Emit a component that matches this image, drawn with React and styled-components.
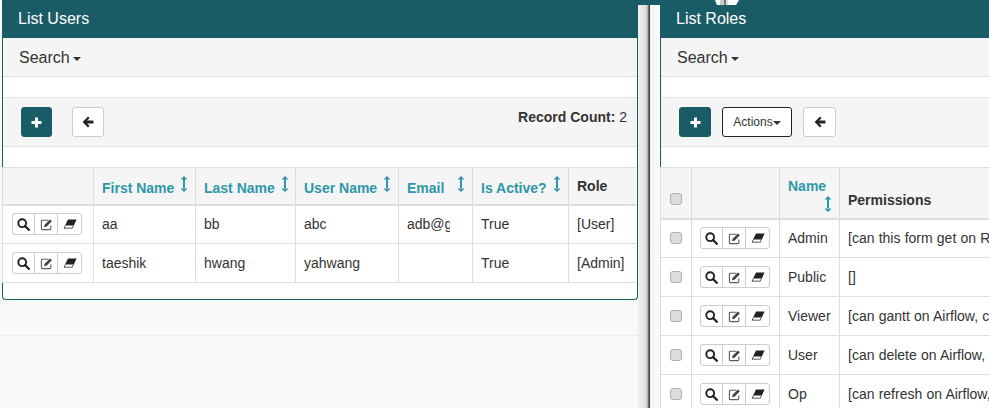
import styled, { createGlobalStyle } from 'styled-components';

const TEAL = '#1a5c66';
const LINK = '#2d97a8';

const GlobalStyle = createGlobalStyle`
  html, body {
    margin: 0;
    height: 408px;
    overflow: hidden;
    background: #fff;
  }
  body {
    font-family: "Liberation Sans", Arial, sans-serif;
    font-size: 14px;
    color: #333;
  }
`;

const Page = styled.div`
  position: relative;
  width: 989px;
  height: 408px;
  overflow: hidden;
`;

const TopStrip = styled.div`
  height: 5px;
  margin-left: 2px;
  background: ${TEAL};
`;

// bit of the page behind that pokes out above the right panel
const TopPeek = styled.div`
  position: absolute;
  left: 715px;
  top: 0;
  width: 24px;
  height: 5px;
  background: linear-gradient(90deg, #fff 0 5px, #ccc 5px 9px, #777 9px 11px, #ddd 11px 13px, #fff 13px);
  clip-path: polygon(0 0, 100% 0, 88% 100%, 8% 100%);
`;

const Columns = styled.div`
  display: flex;
  height: 403px;
`;

const LeftColumn = styled.div`
  flex: 0 0 638px;
  padding-left: 2px;
  box-sizing: border-box;
  background: #f9f9f9;
`;

const RightColumn = styled.div`
  flex: 0 0 700px;
`;

const Divider = styled.div`
  flex: 0 0 22px;
  background: linear-gradient(
    90deg,
    #f1f1f1 0,
    #e6e6e6 6px,
    #cfcfcf 9px,
    #9a9a9a 10px,
    #444 11px,
    #444 12px,
    #f4f4f4 12px,
    #fbfbfb 22px
  );
`;

const Panel = styled.div`
  border: 1px solid ${TEAL};
  border-top: 0;
  border-radius: 0 0 4px 4px;
  background: #fff;
  height: ${(props) => props.$height};
  box-sizing: border-box;
`;

const PanelTitle = styled.div`
  height: 33px;
  margin: 0 -1px;
  padding-left: ${(props) => props.$indent}px;
  background: ${TEAL};
  color: #fff;
  font-size: 16px;
  line-height: 27px;
`;

const SearchBar = styled.div`
  display: flex;
  align-items: center;
  height: 39px;
  padding: 2px 0 0 ${(props) => props.$indent}px;
  box-sizing: border-box;
  background: #f5f5f5;
  border-bottom: 1px solid #ddd;
  font-size: 16px;
  color: #333;
`;

const Caret = styled.span`
  width: 0;
  height: 0;
  margin-left: ${(props) => props.$gap ?? 3}px;
  margin-top: 2px;
  border-top: 4px solid #333;
  border-left: 4px solid transparent;
  border-right: 4px solid transparent;
`;

const Toolbar = styled.div`
  display: flex;
  align-items: flex-start;
  height: 50px;
  margin: 20px 0;
  padding: 9px 10px 0 18px;
  box-sizing: border-box;
  background: #f5f5f5;
  border-top: 1px solid #e3e3e3;
  border-bottom: 1px solid #e3e3e3;
`;

const Button = styled.button`
  display: inline-flex;
  align-items: center;
  justify-content: center;
  width: ${(props) => props.$width}px;
  height: 30px;
  margin-right: ${(props) => props.$gap}px;
  padding: 0;
  border: 1px solid #ccc;
  border-radius: 3px;
  background: #fff;
  color: #333;
  font-family: inherit;
  font-size: 12px;
`;

const AddButton = styled(Button)`
  background: ${TEAL};
  border-color: ${TEAL};
`;

const ActionsButton = styled(Button)`
  border-color: #222;
`;

const RecordCount = styled.div`
  margin-left: auto;
  line-height: 20px;
  b {
    font-weight: bold;
  }
`;

const Table = styled.table`
  border-collapse: collapse;
  table-layout: fixed;
  width: ${(props) => props.$width}px;
  margin-left: -1px;
  tr > :last-child {
    border-right: 0;
  }
`;

const HeadCell = styled.th`
  height: ${(props) => props.$height}px;
  padding: ${(props) => props.$padding || '5px 8px'};
  box-sizing: border-box;
  background: #f5f5f5;
  border: 1px solid #ddd;
  border-bottom: 2px solid #ddd;
  text-align: left;
  vertical-align: ${(props) => props.$align || 'middle'};
  font-weight: bold;
  color: ${(props) => (props.$sortable ? LINK : '#333')};
  white-space: nowrap;
`;

const Cell = styled.td`
  height: 39px;
  padding: 0 8px;
  box-sizing: border-box;
  border: 1px solid #ddd;
  white-space: nowrap;
  overflow: hidden;
`;

const BoxCell = styled(Cell)`
  padding: 0;
  text-align: center;
`;

const PermCell = styled(Cell)`
  word-spacing: 0.3px;
`;

const Clip = styled.div`
  width: 43px;
  overflow: hidden;
`;

const Check = styled.input.attrs({ type: 'checkbox' })`
  appearance: none;
  display: block;
  width: 12px;
  height: 12px;
  margin: 0 auto 0 9px;
  background: #dcdcdc;
  border: 1px solid #b0b0b0;
  border-radius: 3px;
`;

const IconGroup = styled.div`
  display: flex;
  width: 70px;
  height: 22px;
  margin-left: ${(props) => props.$indent}px;
  box-sizing: border-box;
  border: 1px solid #ccc;
  border-radius: 3px;
  background: #fff;
`;

const IconCell = styled.span`
  display: flex;
  flex: ${(props) => props.$grow} 0 0;
  align-items: center;
  justify-content: center;
  & + & {
    border-left: 1px solid #ccc;
  }
`;

const SortMark = styled.svg`
  width: 8px;
  height: 16px;
  margin-left: ${(props) => props.$gap}px;
  vertical-align: 1px;
  color: ${LINK};
`;

const NameWrap = styled.div`
  display: flex;
  flex-direction: column;
  line-height: 20px;
`;

const WrappedSort = styled(SortMark)`
  align-self: flex-end;
  margin: 0 -1px 0 0;
`;

const Footer = styled.div`
  margin-top: 35px;
  margin-left: -2px;
  border-top: 1px solid #eee;
  height: 60px;
`;

const Sort = ({ gap = 6 }) => (
  <SortMark $gap={gap} viewBox="0 0 8 16">
    <path d="M3 3h2v10H3z M4 0l3.5 3.6h-7z M4 16l3.5-3.6h-7z" fill="currentColor" />
  </SortMark>
);

const SearchIcon = () => (
  <svg width="13" height="13" viewBox="0 0 13 13">
    <circle cx="5.2" cy="5.2" r="3.9" fill="none" stroke="#222" strokeWidth="1.9" />
    <path d="M8 8l3.8 3.8" stroke="#222" strokeWidth="2.3" strokeLinecap="round" />
  </svg>
);

const EditIcon = () => (
  <svg width="13" height="13" viewBox="0 0 13 13">
    <path d="M8.5 2.2H2.4a1 1 0 0 0-1 1v7.4a1 1 0 0 0 1 1h7.4a1 1 0 0 0 1-1V7.5" fill="none" stroke="#6b5a4a" strokeWidth="1.1" />
    <path d="M4.6 6.8L10 1.4l1.9 1.9L6.5 8.7l-2.4.5z" fill="#444" />
  </svg>
);

const EraserIcon = () => (
  <svg width="14" height="10" viewBox="0 0 14 10">
    <path d="M5 .5H13.6L9.4 9.5H.6z" fill="#222" />
    <path d="M2.6 6.6H10.2L9 8.7H1.8z" fill="#fff" />
  </svg>
);

const PlusIcon = () => (
  <svg width="11" height="11" viewBox="0 0 11 11">
    <path d="M4 .5h3V4h3.5v3H7v3.5H4V7H.5V4H4z" fill="#fff" />
  </svg>
);

const BackIcon = () => (
  <svg width="12" height="12" viewBox="0 0 12 12">
    <path d="M6 .6l1.6 1.6L5 4.6h6.4v2.8H5l2.6 2.4L6 11.4.6 6z" fill="#222" />
  </svg>
);

const RowActions = ({ indent }) => (
  <IconGroup $indent={indent}>
    <IconCell $grow={22}><SearchIcon /></IconCell>
    <IconCell $grow={23}><EditIcon /></IconCell>
    <IconCell $grow={24}><EraserIcon /></IconCell>
  </IconGroup>
);

const Search = ({ indent }) => (
  <SearchBar $indent={indent}>
    Search
    <Caret />
  </SearchBar>
);

const users = [
  { first: 'aa', last: 'bb', login: 'abc', email: 'adb@gmail.com', active: 'True', role: '[User]' },
  { first: 'taeshik', last: 'hwang', login: 'yahwang', email: '', active: 'True', role: '[Admin]' },
];

const userColumns = [
  { label: 'First Name', width: 102 },
  { label: 'Last Name', width: 100 },
  { label: 'User Name', width: 103 },
  { label: 'Email', width: 74, gap: 13 },
  { label: 'Is Active?', width: 96 },
];

const roles = [
  { name: 'Admin', perms: '[can this form get on ResetPasswordView, can this form post on ResetPasswordView]' },
  { name: 'Public', perms: '[]' },
  { name: 'Viewer', perms: '[can gantt on Airflow, can index on Airflow, can log on Airflow]' },
  { name: 'User', perms: '[can delete on Airflow, can clear on Airflow, can code on Airflow]' },
  { name: 'Op', perms: '[can refresh on Airflow, can tree on Airflow, can task on Airflow]' },
];

function App() {
  return (
    <Page>
      <GlobalStyle />
      <TopStrip />
      <TopPeek />
      <Columns>
        <LeftColumn>
          <Panel $height="295px">
            <PanelTitle $indent={16}>List Users</PanelTitle>
            <Search indent={16} />
            <Toolbar>
              <AddButton $width={31} $gap={20}><PlusIcon /></AddButton>
              <Button $width={32} $gap={0}><BackIcon /></Button>
              <RecordCount><b>Record Count:</b> 2</RecordCount>
            </Toolbar>
            <Table $width={634}>
              <colgroup>
                <col width={91} />
                {userColumns.map((col) => <col key={col.label} width={col.width} />)}
                <col />
              </colgroup>
              <thead>
                <tr>
                  <HeadCell $height={37} />
                  {userColumns.map((col) => (
                    <HeadCell key={col.label} $height={37} $sortable>
                      {col.label}
                      <Sort gap={col.gap} />
                    </HeadCell>
                  ))}
                  <HeadCell $height={37}>Role</HeadCell>
                </tr>
              </thead>
              <tbody>
                {users.map((user) => (
                  <tr key={user.login}>
                    <BoxCell><RowActions indent={9} /></BoxCell>
                    <Cell>{user.first}</Cell>
                    <Cell>{user.last}</Cell>
                    <Cell>{user.login}</Cell>
                    <Cell><Clip>{user.email}</Clip></Cell>
                    <Cell>{user.active}</Cell>
                    <Cell>{user.role}</Cell>
                  </tr>
                ))}
              </tbody>
            </Table>
          </Panel>
          <Footer />
        </LeftColumn>
        <Divider />
        <RightColumn>
          <Panel $height="600px">
            <PanelTitle $indent={16}>List Roles</PanelTitle>
            <Search indent={16} />
            <Toolbar>
              <AddButton $width={32} $gap={11}><PlusIcon /></AddButton>
              <ActionsButton $width={70} $gap={11}>
                Actions
                <Caret $gap={0} />
              </ActionsButton>
              <Button $width={33} $gap={0}><BackIcon /></Button>
            </Toolbar>
            <Table $width={698}>
              <colgroup>
                <col width={31} />
                <col width={88} />
                <col width={60} />
                <col />
              </colgroup>
              <thead>
                <tr>
                  <HeadCell $height={51} $align="bottom" $padding="0 0 13px"><Check /></HeadCell>
                  <HeadCell $height={51} />
                  <HeadCell $height={51} $sortable $align="bottom" $padding="0 8px 6px">
                    <NameWrap>
                      Name
                      <WrappedSort viewBox="0 0 8 16">
                        <path d="M3 3h2v10H3z M4 0l3.5 3.6h-7z M4 16l3.5-3.6h-7z" fill="currentColor" />
                      </WrappedSort>
                    </NameWrap>
                  </HeadCell>
                  <HeadCell $height={51} $align="bottom" $padding="0 8px 10px">Permissions</HeadCell>
                </tr>
              </thead>
              <tbody>
                {roles.map((role) => (
                  <tr key={role.name}>
                    <BoxCell><Check /></BoxCell>
                    <BoxCell><RowActions indent={8} /></BoxCell>
                    <Cell>{role.name}</Cell>
                    <PermCell>{role.perms}</PermCell>
                  </tr>
                ))}
              </tbody>
            </Table>
          </Panel>
        </RightColumn>
      </Columns>
    </Page>
  );
}

export default App;
